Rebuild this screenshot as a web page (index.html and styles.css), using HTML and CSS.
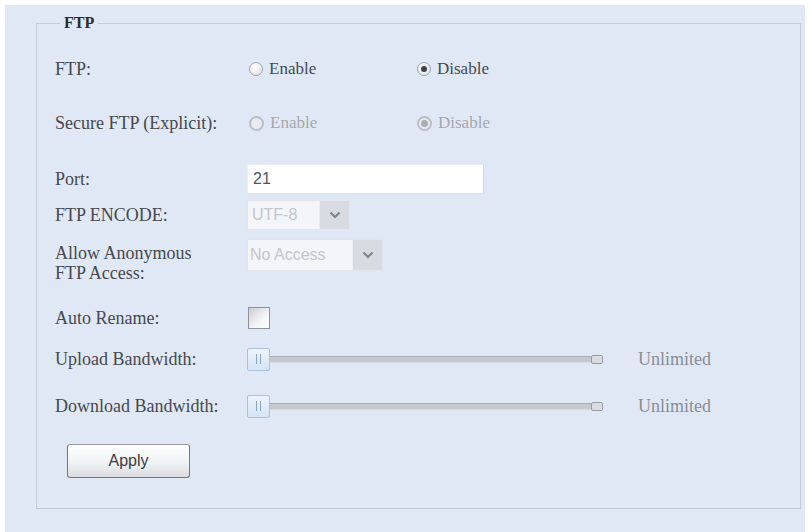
FILE: index.html
```html
<!DOCTYPE html>
<html>
<head>
<meta charset="utf-8">
<link rel="stylesheet" href="styles.css">
</head>
<body>
<div class="page">
  <fieldset class="panel">
    <legend class="legend">FTP</legend>

    <div class="row row-ftp">
      <span class="label">FTP:</span>
      <div class="radios">
        <span class="opt"><span class="radio"></span>Enable</span>
        <span class="opt"><span class="radio checked"></span>Disable</span>
      </div>
    </div>

    <div class="row row-sftp">
      <span class="label">Secure FTP (Explicit):</span>
      <div class="radios disabled">
        <span class="opt"><span class="radio"></span>Enable</span>
        <span class="opt"><span class="radio checked"></span>Disable</span>
      </div>
    </div>

    <div class="row row-port">
      <span class="label">Port:</span>
      <div class="textbox">21</div>
    </div>

    <div class="row row-enc">
      <span class="label">FTP ENCODE:</span>
      <div class="select select-enc"><span class="sel-text">UTF-8</span><span class="sel-arrow"><svg width="12" height="8" viewBox="0 0 12 8"><path d="M1.5 1.5 L6 6 L10.5 1.5" fill="none" stroke="#7d8590" stroke-width="2.2"/></svg></span></div>
    </div>

    <div class="row row-anon">
      <span class="label label-2">Allow Anonymous<br>FTP Access:</span>
      <div class="select select-anon"><span class="sel-text">No Access</span><span class="sel-arrow"><svg width="12" height="8" viewBox="0 0 12 8"><path d="M1.5 1.5 L6 6 L10.5 1.5" fill="none" stroke="#7d8590" stroke-width="2.2"/></svg></span></div>
    </div>

    <div class="row row-rename">
      <span class="label">Auto Rename:</span>
      <span class="checkbox"></span>
    </div>

    <div class="row row-up">
      <span class="label">Upload Bandwidth:</span>
      <div class="slider-wrap">
        <div class="slider">
          <span class="handle"><i></i><i></i></span>
          <span class="track"></span>
          <span class="cap"></span>
        </div>
        <span class="value">Unlimited</span>
      </div>
    </div>

    <div class="row row-down">
      <span class="label">Download Bandwidth:</span>
      <div class="slider-wrap">
        <div class="slider">
          <span class="handle"><i></i><i></i></span>
          <span class="track"></span>
          <span class="cap"></span>
        </div>
        <span class="value">Unlimited</span>
      </div>
    </div>

    <button class="apply" type="button">Apply</button>
  </fieldset>
</div>
</body>
</html>
```

FILE: styles.css
```css
html, body {
  margin: 0;
  padding: 0;
  background: #ffffff;
}

body {
  font-family: "Liberation Serif", "Times New Roman", serif;
  color: #3b3d42;
}

.page {
  margin: 5px 4px 0 5px;
  padding-top: 9px;
  height: 518px;
  background: #e1e8f5;
  overflow: hidden;
}

.panel {
  margin: 0 4px 0 31px;
  padding: 0 0 30px 18px;
  border: 1px solid #c4ccd9;
  min-width: 0;
  display: block;
}

.legend {
  font-weight: bold;
  font-size: 16px;
  line-height: 18px;
  color: #2a2c30;
  padding: 0 4px;
  margin-left: 5px;
}

.row {
  display: grid;
  grid-template-columns: 192px auto;
  align-items: center;
  height: 30px;
}

.label {
  font-size: 18px;
  line-height: 20px;
  color: #45484e;
  white-space: nowrap;
}

.row-ftp { margin-top: 22px; }
.row-sftp { margin-top: 24px; }
.row-port { margin-top: 26px; }
.row-enc { margin-top: 6px; }
.row-anon { margin-top: 9px; height: 42px; align-items: start; }
.row-rename { margin-top: 22px; }
.row-up { margin-top: 11px; }
.row-down { margin-top: 17px; }

.label-2 { padding-top: 4px; }

.radios {
  display: flex;
  align-items: center;
  font-size: 17px;
  color: #45484e;
}

.opt {
  display: inline-flex;
  align-items: center;
  width: 166px;
  padding-left: 2px;
}

.radio {
  width: 12px;
  height: 12px;
  border-radius: 50%;
  border: 1px solid #a2a7ae;
  background: radial-gradient(circle at 40% 35%, #ffffff 0%, #dfe2e6 80%);
  margin-right: 6px;
  position: relative;
  box-sizing: content-box;
}

.radio.checked::after {
  content: "";
  position: absolute;
  left: 3px;
  top: 3px;
  width: 6px;
  height: 6px;
  border-radius: 50%;
  background: #3d4450;
}

.radios.disabled {
  color: #a3a8b0;
}

.radios.disabled .radio {
  border-color: #b9bec5;
  border-width: 2px;
  width: 11px;
  height: 11px;
  background: #e8ebef;
}

.radios.disabled .radio.checked::after {
  background: #a8aeb6;
  left: 2px;
  top: 2px;
  width: 7px;
  height: 7px;
}

.textbox {
  width: 237px;
  height: 30px;
  box-sizing: border-box;
  background: #ffffff;
  border: 1px solid #e9ecf1;
  border-right-color: #d3d8df;
  border-bottom-color: #dde2e8;
  font-family: "Liberation Sans", Arial, sans-serif;
  font-size: 16px;
  line-height: 28px;
  padding-left: 5px;
  color: #50545b;
}

.select {
  display: flex;
  height: 30px;
  box-sizing: border-box;
  background: #f3f5f8;
  border: 1px solid #e2e6ec;
  font-family: "Liberation Sans", Arial, sans-serif;
  font-size: 16px;
  color: #c2c6cc;
}

.select-enc { width: 103px; }
.select-anon { width: 136px; height: 32px; }

.sel-text {
  flex: 1;
  padding-left: 4px;
  line-height: 28px;
  white-space: nowrap;
  overflow: hidden;
}

.select-anon .sel-text { line-height: 30px; padding-left: 2px; }

.sel-arrow {
  width: 29px;
  display: flex;
  align-items: center;
  justify-content: center;
  background: #d8dce2;
  border-left: 1px solid #e9ecf0;
}

.checkbox {
  width: 20px;
  height: 20px;
  margin-left: 1px;
  border: 1px solid #8e9298;
  background: linear-gradient(135deg, #c9ccd1 0%, #f4f5f7 60%, #ffffff 100%);
  box-sizing: content-box;
}

.slider-wrap {
  display: flex;
  align-items: center;
}

.slider {
  display: flex;
  align-items: center;
  width: 356px;
}

.handle {
  width: 21px;
  height: 21px;
  border: 1px solid #a9c2e2;
  border-radius: 2px;
  background: linear-gradient(#eef4fc, #d5e3f5);
  display: flex;
  justify-content: center;
  align-items: center;
  gap: 3px;
  flex: none;
}

.handle i {
  width: 1px;
  height: 10px;
  background: #8aa3c4;
}

.track {
  flex: 1;
  height: 5px;
  background: #c5c9cd;
  border-top: 1px solid #a9aeb4;
  border-bottom: 1px solid #d8dce0;
}

.cap {
  width: 10px;
  height: 7px;
  border: 1px solid #979ca3;
  border-radius: 2px;
  background: #d9dce0;
  flex: none;
}

.value {
  margin-left: 35px;
  font-size: 18px;
  color: #8a8e95;
}

.apply {
  display: block;
  margin: 23px 0 0 12px;
  width: 123px;
  height: 34px;
  border: 1px solid #74787e;
  border-top-color: #9a9ea4;
  border-radius: 3px;
  background: linear-gradient(#ffffff 0%, #f1f2f4 55%, #d9dbdf 100%);
  font-family: "Liberation Sans", Arial, sans-serif;
  font-size: 16px;
  color: #3a3a40;
  padding: 0;
}
```
